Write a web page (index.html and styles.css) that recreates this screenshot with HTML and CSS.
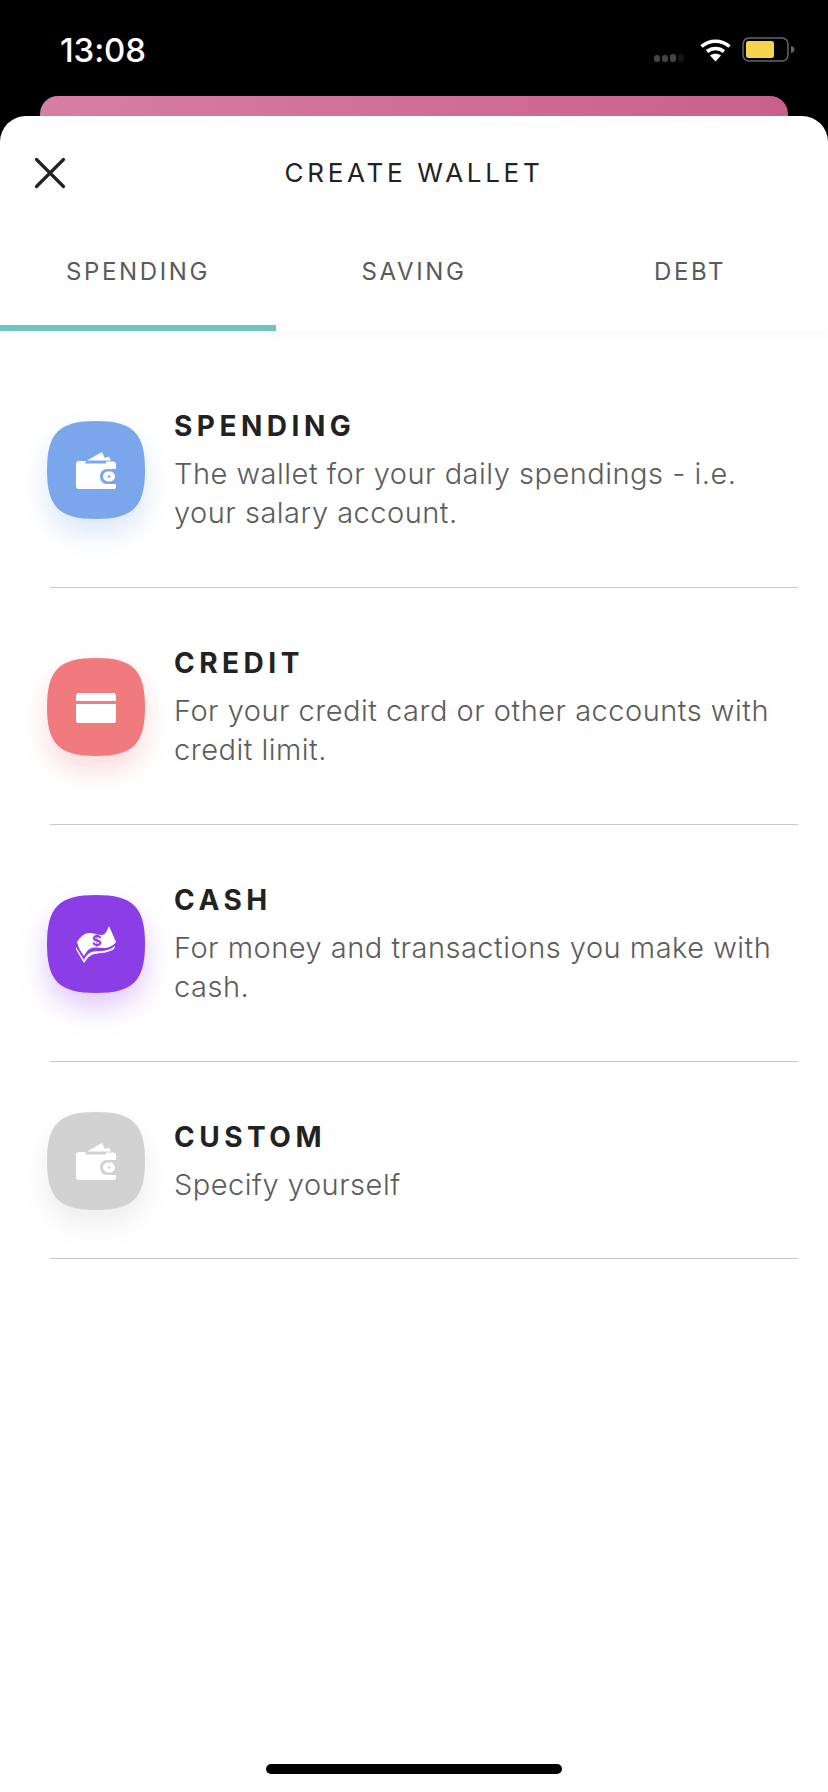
FILE: index.html
```html
<!DOCTYPE html>
<html lang="en">
<head>
<meta charset="utf-8">
<title>Create Wallet</title>
<link rel="stylesheet" href="styles.css">
</head>
<body>
<div class="phone">
  <header class="status">
    <span class="time">13:08</span>
    <div class="status-icons">
      <svg class="signal" width="30" height="8" viewBox="0 0 30 8"><rect x="0" y="1" width="6" height="7" rx="2.500" fill="#444"/><rect x="8" y="1" width="6" height="7" rx="2.500" fill="#444"/><rect x="16" y="0" width="6" height="8" rx="2.500" fill="#444"/><rect x="24" y="0" width="6" height="8" rx="2.500" fill="#161616"/></svg>
      <svg class="wifi" width="33" height="24" viewBox="0 0 32 24"><path d="M2 8.500C10 1.500 22 1.500 30 8.500M7.500 13.500C12.500 9.500 19.500 9.500 24.500 13.500" fill="none" stroke="#fff" stroke-width="3.600"/><path d="M10.500 17.500C13.500 15 18.500 15 21.500 17.500L16 23.500Z" fill="#fff"/></svg>
      <svg class="battery" width="53" height="25" viewBox="0 0 53 25"><rect x="1" y="1" width="45" height="23" rx="6" fill="none" stroke="#666" stroke-width="1.500"/><rect x="4" y="4" width="28" height="17" rx="2.500" fill="#f5d34c"/><path d="M49 9C51.500 9.500 52.500 11 52.500 12.500C52.500 14 51.500 15.500 49 16Z" fill="#666"/></svg>
    </div>
  </header>
  <div class="peek"></div>
  <main class="sheet">
    <div class="sheet-head">
      <svg class="close" width="32" height="32" viewBox="0 0 32 32"><path d="M2.500 2.500L29.500 29.500M29.500 2.500L2.500 29.500" fill="none" stroke="#222" stroke-width="3.200" stroke-linecap="round"/></svg>
      <h1 class="title">CREATE WALLET</h1>
    </div>
    <nav class="tabs">
      <a class="tab tab-active">SPENDING</a>
      <a class="tab">SAVING</a>
      <a class="tab">DEBT</a>
    </nav>
    <ul class="list">
      <li class="row row-first">
        <svg class="badge badge-blue" width="98" height="98" viewBox="0 0 98 98">
          <path class="squircle" d="M49 0C86 0 98 12 98 49C98 86 86 98 49 98C12 98 0 86 0 49C0 12 12 0 49 0Z"/>
          <path class="glyph" d="M40 39.500L55 31L59 39.500ZM51 39.500L62 35.500L64 39.500Z"/>
          <path class="glyph" d="M32 40H39L38 42.500H59V40.500H65.500C67 40.500 69 41 69 43V48H60C56 48 53 51 53 55.500C53 60 56 63 60 63H69V66C69 67.500 68 68 66 68H32C30 68 29 67 29 65V43C29 41 30 40 32 40Z"/>
          <rect class="glyph" x="56" y="50.500" width="12" height="10" rx="5"/>
          <circle class="hole" cx="62" cy="55.500" r="1.300"/>
        </svg>
        <div class="copy">
          <h2 class="name">SPENDING</h2>
          <p class="desc">The wallet for your daily spendings - i.e. your salary account.</p>
        </div>
      </li>
      <li class="row">
        <svg class="badge badge-red" width="98" height="98" viewBox="0 0 98 98">
          <path class="squircle" d="M49 0C86 0 98 12 98 49C98 86 86 98 49 98C12 98 0 86 0 49C0 12 12 0 49 0Z"/>
          <path class="glyph" d="M31 35H67C68 35 69 36 69 37V43H29V37C29 36 30 35 31 35ZM29 46H69V63C69 64 68 65 67 65H31C30 65 29 64 29 63Z"/>
        </svg>
        <div class="copy">
          <h2 class="name">CREDIT</h2>
          <p class="desc">For your credit card or other accounts with credit limit.</p>
        </div>
      </li>
      <li class="row">
        <svg class="badge badge-purple" width="98" height="98" viewBox="0 0 98 98">
          <path class="squircle" d="M49 0C86 0 98 12 98 49C98 86 86 98 49 98C12 98 0 86 0 49C0 12 12 0 49 0Z"/>
          <path class="glyph" d="M30 47C34 41 38 38 42 38C47 38 51 40 55 40C58 40 60 36 62 31L69 47C66 51 61 53 57 53C53 53 49 52 45 53C41 54 39 57 37 61C35 58 33 55 32 53Z"/>
          <path class="glyph" d="M29 52L37 65C39 60 43 57 47 56.500C52 56 63 57 68 50.500L67 54C62 58 53 58 47 59C43 60 40 63 37 68C34 63 31 58 29 54Z"/>
          <text class="bill" x="50" y="51">$</text>
        </svg>
        <div class="copy">
          <h2 class="name">CASH</h2>
          <p class="desc">For money and transactions you make with cash.</p>
        </div>
      </li>
      <li class="row row-short">
        <svg class="badge badge-gray" width="98" height="98" viewBox="0 0 98 98">
          <path class="squircle" d="M49 0C86 0 98 12 98 49C98 86 86 98 49 98C12 98 0 86 0 49C0 12 12 0 49 0Z"/>
          <path class="glyph" d="M40 39.500L55 31L59 39.500ZM51 39.500L62 35.500L64 39.500Z"/>
          <path class="glyph" d="M32 40H39L38 42.500H59V40.500H65.500C67 40.500 69 41 69 43V48H60C56 48 53 51 53 55.500C53 60 56 63 60 63H69V66C69 67.500 68 68 66 68H32C30 68 29 67 29 65V43C29 41 30 40 32 40Z"/>
          <rect class="glyph" x="56" y="50.500" width="12" height="10" rx="5"/>
          <circle class="hole" cx="62" cy="55.500" r="1.300"/>
        </svg>
        <div class="copy">
          <h2 class="name">CUSTOM</h2>
          <p class="desc">Specify yourself</p>
        </div>
      </li>
    </ul>
    <div class="home-bar"></div>
  </main>
</div>
</body>
</html>
```
FILE: styles.css
```css
* { box-sizing: border-box; margin: 0; padding: 0; }
html, body { background: #000; }
body { font-family: Inter, "Noto Sans", sans-serif; }
.phone { width: 828px; height: 1792px; display: flex; flex-direction: column; overflow: hidden; }

.status { height: 96px; flex: none; display: flex; justify-content: space-between; align-items: flex-start; padding: 30px 33px 0 60px; }
.time { color: #fff; font-size: 33px; line-height: 40px; font-weight: 500; letter-spacing: -0.1px; }
.status-icons { display: flex; align-items: flex-start; gap: 10px; padding-top: 7px; }
.signal { margin-top: 17px; margin-right: 5px; }
.wifi { margin-top: 1px; }

.peek { height: 20px; flex: none; margin: 0 40px; border-radius: 18px 18px 0 0; background: linear-gradient(100deg, #d67fa3, #c8608a); }

.sheet { flex: 1; display: flex; flex-direction: column; background: #fff; border-radius: 26px 26px 0 0; }
.sheet-head { height: 114px; flex: none; display: flex; align-items: center; justify-content: center; position: relative; }
.close { position: absolute; left: 34px; top: 41px; }
.title { font-size: 26px; font-weight: 400; letter-spacing: 3.700px; color: #222; line-height: 114px; }

.tabs { height: 101px; flex: none; display: grid; grid-template-columns: repeat(3, 1fr); box-shadow: 0 6px 10px rgba(0, 0, 0, 0.025); background: #fff; }
.tab { font-size: 24px; font-weight: 400; letter-spacing: 2.600px; color: #5a5a5a; text-align: center; line-height: 84px; }
.tab-active { border-bottom: 6px solid #6fc3c0; }

.list { list-style: none; padding: 0 30px 0 50px; }
.row { height: 237px; display: flex; align-items: flex-start; gap: 29px; border-bottom: 1px solid #c8c8c8; padding-top: 70px; }
.row-first { height: 257px; padding-top: 90px; }
.row-short { height: 197px; padding-top: 50px; }
.badge { flex: none; margin-left: -3px; overflow: visible; }
.glyph { fill: #fff; }
.badge-blue .squircle { fill: #7aa7eb; filter: drop-shadow(0 14px 14px rgba(122, 167, 235, 0.28)); }
.badge-red .squircle { fill: #f07a7d; filter: drop-shadow(0 14px 14px rgba(240, 122, 125, 0.28)); }
.badge-purple .squircle { fill: #8b3ee6; filter: drop-shadow(0 14px 14px rgba(139, 62, 230, 0.28)); }
.badge-gray .squircle { fill: #d2d2d2; filter: drop-shadow(0 14px 14px rgba(0, 0, 0, 0.07)); }
.badge-blue .hole { fill: #7aa7eb; }
.badge-gray .hole { fill: #d2d2d2; }
.bill { fill: #8b3ee6; font-family: Inter, sans-serif; font-size: 15px; font-weight: 700; text-anchor: middle; }

.copy { flex: 1; margin-top: -12px; }
.row-short .copy { margin-top: 8px; }
.name { font-size: 28px; font-weight: 700; letter-spacing: 4.500px; color: #222; line-height: 34px; }
.desc { font-size: 29px; font-weight: 300; letter-spacing: 0.500px; color: #5c5c5c; line-height: 39px; margin-top: 11px; }

.home-bar { width: 296px; height: 10px; flex: none; margin: auto auto 18px; background: #000; border-radius: 5px; }
```
